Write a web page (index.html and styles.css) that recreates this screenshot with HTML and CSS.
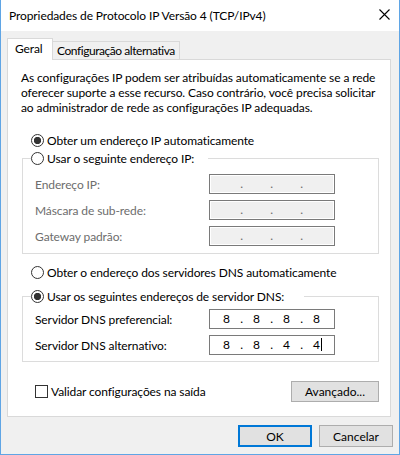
FILE: index.html
```html
<!DOCTYPE html>
<html lang="pt-BR">
<head>
<meta charset="utf-8">
<title>Propriedades de Protocolo IP Versão 4 (TCP/IPv4)</title>
<link rel="stylesheet" href="styles.css">
</head>
<body>
<div class="window">
  <div class="titlebar">
    <span class="title">Propriedades de Protocolo IP Versão 4 (TCP/IPv4)</span>
    <span class="close"><svg width="11" height="11" viewBox="0 0 11 11"><path d="M0.5 0.5L10.5 10.5M10.5 0.5L0.5 10.5" stroke="#000" stroke-width="1.1" fill="none"/></svg></span>
  </div>
  <div class="content">
    <div class="tabs">
      <div class="tab active">Geral</div>
      <div class="tab">Configuração alternativa</div>
    </div>
    <div class="panel">
      <p class="desc">As configurações IP podem ser atribuídas automaticamente se a rede<br>oferecer suporte a esse recurso. Caso contrário, você precisa solicitar<br>ao administrador de rede as configurações IP adequadas.</p>
      <label class="radio r-first"><span class="rb on"></span>Obter um endereço IP automaticamente</label>
      <fieldset class="group g-ip">
        <legend class="legend-ip"><span class="radio"><span class="rb"></span>Usar o seguinte endereço IP:</span></legend>
        <div class="rows">
          <div class="row off"><span class="lbl">Endereço IP:</span><span class="ipbox dis"><span class="oct"></span><span class="dot">.</span><span class="oct"></span><span class="dot">.</span><span class="oct"></span><span class="dot">.</span><span class="oct"></span></span></div>
          <div class="row off"><span class="lbl">Máscara de sub-rede:</span><span class="ipbox dis"><span class="oct"></span><span class="dot">.</span><span class="oct"></span><span class="dot">.</span><span class="oct"></span><span class="dot">.</span><span class="oct"></span></span></div>
          <div class="row off"><span class="lbl">Gateway padrão:</span><span class="ipbox dis"><span class="oct"></span><span class="dot">.</span><span class="oct"></span><span class="dot">.</span><span class="oct"></span><span class="dot">.</span><span class="oct"></span></span></div>
        </div>
      </fieldset>
      <label class="radio r-dns-auto"><span class="rb"></span>Obter o endereço dos servidores DNS automaticamente</label>
      <fieldset class="group g-dns">
        <legend class="legend-dns"><span class="radio"><span class="rb on"></span>Usar os seguintes endereços de servidor DNS:</span></legend>
        <div class="rows rows-dns">
          <div class="row"><span class="lbl">Servidor DNS preferencial:</span><span class="ipbox"><span class="oct">8</span><span class="dot">.</span><span class="oct">8</span><span class="dot">.</span><span class="oct">8</span><span class="dot">.</span><span class="oct">8</span></span></div>
          <div class="row"><span class="lbl">Servidor DNS alternativo:</span><span class="ipbox"><span class="oct">8</span><span class="dot">.</span><span class="oct">8</span><span class="dot">.</span><span class="oct">4</span><span class="dot">.</span><span class="oct">4<span class="caret"></span></span></span></div>
        </div>
      </fieldset>
      <div class="bottom-row">
        <label class="check"><span class="cb"></span>Validar configurações na saída</label>
        <button class="btn btn-adv" type="button">Avançado...</button>
      </div>
    </div>
    <div class="actions">
      <button class="btn btn-ok" type="button">OK</button>
      <button class="btn" type="button">Cancelar</button>
    </div>
  </div>
</div>
</body>
</html>
```

FILE: styles.css
```css
* { box-sizing: border-box; }
html, body { margin: 0; padding: 0; background: #fff; }
body {
  font-family: Lato, "Noto Sans", sans-serif;
  font-size: 12px;
  letter-spacing: -0.1px;
  color: #000;
}
.window {
  width: 400px;
  height: 455px;
  border: 1px solid #5fa5e5;
  border-top: 0;
  background: #f0f0f0;
  display: flex;
  flex-direction: column;
}
.titlebar {
  height: 31px;
  flex: none;
  background: #fff;
  display: flex;
  align-items: center;
  justify-content: space-between;
  padding: 0 9px 0 8px;
}
.title { line-height: 16px; white-space: nowrap; }
.close { display: flex; width: 11px; height: 11px; margin-top: -2px; }
.content {
  flex: 1;
  padding: 7px 8px 0 6px;
  display: flex;
  flex-direction: column;
}
.tabs {
  display: flex;
  align-items: flex-end;
  margin-bottom: -1px;
  position: relative;
  z-index: 1;
}
.tab {
  height: 19px;
  width: 127px;
  padding: 0 0 0 4px;
  line-height: 17px;
  letter-spacing: -0.45px;
  white-space: nowrap;
  overflow: hidden;
  border: 1px solid #d9d9d9;
  border-left: 0;
  background: #f0f0f0;
}
.tab.active {
  height: 22px;
  width: 46px;
  padding: 0 0 0 7px;
  line-height: 19px;
  letter-spacing: -0.1px;
  border: 1px solid #d9d9d9;
  border-bottom: 0;
  background: #fff;
}
.panel {
  height: 358px;
  flex: none;
  background: #fff;
  border: 1px solid #d9d9d9;
  display: flex;
  flex-direction: column;
}
.desc {
  margin: 0;
  padding: 10px 0 0 13px;
  line-height: 15px;
  white-space: nowrap;
}
.radio {
  display: flex;
  align-items: center;
  gap: 3px;
  height: 17px;
  line-height: 17px;
  white-space: nowrap;
}
.rb {
  width: 13px;
  height: 13px;
  flex: none;
  border: 1px solid #333;
  border-radius: 50%;
  background: #fff;
}
.rb.on { background: radial-gradient(circle, #333 0 3.4px, #fff 3.9px); }
.r-first { margin: 17px 0 0 23px; }
.group {
  margin: 1px 11px 0 14px;
  padding: 0 0 7px 0;
  border: 1px solid #dcdcdc;
  min-width: 0;
}
.group legend { padding: 0; margin-left: 8px; }
.legend-ip { padding-right: 14px !important; }
.legend-dns { padding-right: 20px !important; }
.rows {
  margin-top: 7px;
  display: flex;
  flex-direction: column;
  gap: 6px;
}
.rows-dns { margin-top: 4px; }
.row {
  display: flex;
  align-items: center;
  height: 20px;
  padding-left: 12px;
  white-space: nowrap;
}
.lbl { width: 174px; flex: none; }
.row.off .lbl { color: #6d6d6d; }
.ipbox {
  width: 126px;
  height: 20px;
  border: 1px solid #7a7a7a;
  background: #fff;
  display: flex;
  align-items: center;
  padding-left: 4px;
}
.ipbox.dis { background: #f0f0f0; box-shadow: inset 0 0 0 1px #fff; color: #6d6d6d; }
.oct { width: 25px; text-align: center; line-height: 18px; }
.dot { width: 5px; text-align: center; line-height: 18px; }
.caret {
  display: inline-block;
  width: 1px;
  height: 13px;
  background: #000;
  vertical-align: middle;
  margin: -2px -2px 0 1px;
}
.r-dns-auto { margin: 10px 0 0 23px; }
.g-dns { margin-top: 7px; padding-bottom: 6px; }
.bottom-row {
  display: flex;
  align-items: center;
  justify-content: space-between;
  margin: 19px 11px 0 27px;
}
.check {
  display: flex;
  align-items: center;
  gap: 3px;
  white-space: nowrap;
}
.cb {
  width: 13px;
  height: 13px;
  border: 1px solid #333;
  background: #fff;
}
.btn {
  font: inherit;
  color: #000;
  background: #e1e1e1;
  border: 1px solid #adadad;
  height: 22px;
  width: 74px;
  padding: 0;
  border-radius: 0;
}
.btn-adv { width: 88px; height: 21px; }
.btn-ok { border: 2px solid #0078d7; }
.actions {
  display: flex;
  justify-content: flex-end;
  gap: 7px;
  margin: 8px -2px 0 0;
}
```
